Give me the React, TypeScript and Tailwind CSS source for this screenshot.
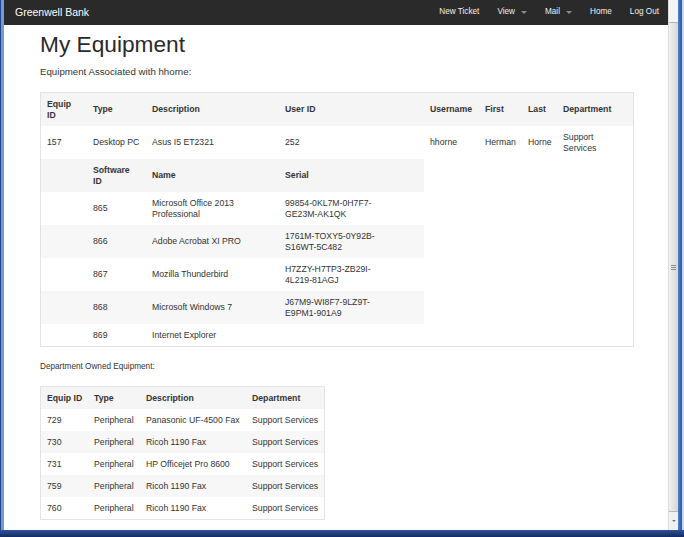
import React from "react";

const td = "px-[6px] py-[5.5px] leading-[11px] align-middle text-left";
const th = "px-[6px] py-[5.5px] leading-[11px] align-middle text-left font-bold text-[#333]";

function Caret() {
  return (
    <span className="ml-[6px] inline-block w-0 h-0 border-l-[3px] border-r-[3px] border-t-[3px] border-l-transparent border-r-transparent border-t-[#8a8a8a] align-middle" />
  );
}

const software = [
  { id: "865", name: ["Microsoft Office 2013", "Professional"], serial: ["99854-0KL7M-0H7F7-", "GE23M-AK1QK"] },
  { id: "866", name: ["Adobe Acrobat XI PRO"], serial: ["1761M-TOXY5-0Y92B-", "S16WT-5C482"] },
  { id: "867", name: ["Mozilla Thunderbird"], serial: ["H7ZZY-H7TP3-ZB29I-", "4L219-81AGJ"] },
  { id: "868", name: ["Microsoft Windows 7"], serial: ["J67M9-WI8F7-9LZ9T-", "E9PM1-901A9"] },
  { id: "869", name: ["Internet Explorer"], serial: [] as string[] },
];

const dept = [
  ["729", "Peripheral", "Panasonic UF-4500 Fax", "Support Services"],
  ["730", "Peripheral", "Ricoh 1190 Fax", "Support Services"],
  ["731", "Peripheral", "HP Officejet Pro 8600", "Support Services"],
  ["759", "Peripheral", "Ricoh 1190 Fax", "Support Services"],
  ["760", "Peripheral", "Ricoh 1190 Fax", "Support Services"],
];

function Lines({ lines }: { lines: string[] }) {
  return (
    <>
      {lines.map((l, i) => (
        <React.Fragment key={i}>
          {i > 0 && <br />}
          {l}
        </React.Fragment>
      ))}
    </>
  );
}

export default function App() {
  return (
    <div className="w-[684px] h-[537px] overflow-hidden flex flex-col bg-white font-['Liberation_Sans',Arial,sans-serif] text-[#333]">
      <div className="flex flex-1 min-h-0">
        {/* left frame */}
        <div className="flex">
          <div className="w-[1px] bg-[#24448a]" />
          <div className="w-[3px] bg-[#6f9bd6]" />
        </div>

        {/* content */}
        <div className="flex-1 flex flex-col min-w-0">
          <nav className="h-[25px] bg-[#2a2a2a] flex items-center pl-[11px] pr-[9px] shrink-0">
            <span className="text-[10.5px] text-white">Greenwell Bank</span>
            <div className="ml-auto flex items-center gap-[18px] text-[8.2px] text-[#f0f0f0]">
              <span>New Ticket</span>
              <span className="flex items-center">View<Caret /></span>
              <span className="flex items-center">Mail<Caret /></span>
              <span>Home</span>
              <span>Log Out</span>
            </div>
          </nav>

          <main className="pl-[36px] pt-[7px]">
            <h1 className="text-[22.7px] leading-[25px] text-[#2a2a2a]">My Equipment</h1>
            <p className="mt-[9px] text-[9.7px] leading-[12px]">Equipment Associated with hhorne:</p>

            <div className="mt-[14px] w-[594px] border border-[#e3e3e3] text-[8.7px]">
              <table className="w-full table-fixed border-collapse">
                <colgroup>
                  <col className="w-[46px]" />
                  <col className="w-[59px]" />
                  <col className="w-[133px]" />
                  <col className="w-[145px]" />
                  <col className="w-[55px]" />
                  <col className="w-[43px]" />
                  <col className="w-[35px]" />
                  <col className="w-[76px]" />
                </colgroup>
                <tbody>
                  <tr className="bg-[#f5f5f5]">
                    <th className={th}>Equip<br />ID</th>
                    <th className={th}>Type</th>
                    <th className={th}>Description</th>
                    <th className={th}>User ID</th>
                    <th className={th}>Username</th>
                    <th className={th}>First</th>
                    <th className={th}>Last</th>
                    <th className={th}>Department</th>
                  </tr>
                  <tr className="bg-white">
                    <td className={td}>157</td>
                    <td className={td}>Desktop PC</td>
                    <td className={td}>Asus I5 ET2321</td>
                    <td className={td}>252</td>
                    <td className={td}>hhorne</td>
                    <td className={td}>Herman</td>
                    <td className={td}>Horne</td>
                    <td className={td}>Support<br />Services</td>
                  </tr>
                  <tr>
                    <td className={`${td} bg-[#f5f5f5]`}></td>
                    <th className={`${th} bg-[#f5f5f5]`}>Software<br />ID</th>
                    <th className={`${th} bg-[#f5f5f5]`}>Name</th>
                    <th className={`${th} bg-[#f5f5f5]`}>Serial</th>
                    <td colSpan={4} className="bg-white"></td>
                  </tr>
                  {software.map((s, i) => {
                    const bg = i % 2 === 1 ? "bg-[#f7f7f7]" : "bg-white";
                    return (
                      <tr key={s.id}>
                        <td className={`${td} ${bg}`}></td>
                        <td className={`${td} ${bg}`}>{s.id}</td>
                        <td className={`${td} ${bg}`}><Lines lines={s.name} /></td>
                        <td className={`${td} ${bg}`}><Lines lines={s.serial} /></td>
                        <td colSpan={4} className="bg-white"></td>
                      </tr>
                    );
                  })}
                </tbody>
              </table>
            </div>

            <p className="mt-[14px] text-[8.2px] leading-[12px]">Department Owned Equipment:</p>

            <div className="mt-[13px] w-[285px] border border-[#e3e3e3] text-[8.7px]">
              <table className="w-full table-fixed border-collapse">
                <colgroup>
                  <col className="w-[47px]" />
                  <col className="w-[52px]" />
                  <col className="w-[106px]" />
                  <col className="w-[78px]" />
                </colgroup>
                <tbody>
                  <tr className="bg-[#f5f5f5]">
                    <th className={`${th} whitespace-nowrap`}>Equip ID</th>
                    <th className={`${th} whitespace-nowrap`}>Type</th>
                    <th className={`${th} whitespace-nowrap`}>Description</th>
                    <th className={`${th} whitespace-nowrap`}>Department</th>
                  </tr>
                  {dept.map((r, i) => (
                    <tr key={r[0]} className={i % 2 === 1 ? "bg-[#f7f7f7]" : "bg-white"}>
                      {r.map((c, j) => (
                        <td key={j} className={`${td} whitespace-nowrap`}>{c}</td>
                      ))}
                    </tr>
                  ))}
                </tbody>
              </table>
            </div>
          </main>
        </div>

        {/* scrollbar */}
        <div className="w-[10px] flex flex-col bg-[#eaeaea] border-l border-[#dcdcdc]">
          <div className="h-[22px] bg-[#f4f4f4]" />
          <div className="flex-1 border-y border-[#b8b8b8] bg-gradient-to-r from-[#f0f0f0] to-[#d6d6d6] flex flex-col items-center justify-center gap-[1px]">
            <div className="w-[5px] h-[1px] bg-[#8c8c8c]" />
            <div className="w-[5px] h-[1px] bg-[#8c8c8c]" />
            <div className="w-[5px] h-[1px] bg-[#8c8c8c]" />
          </div>
          <div className="h-[18px] bg-[#f0f0f0] flex items-center justify-center">
            <span className="inline-block w-0 h-0 border-l-[2px] border-r-[2px] border-t-[2px] border-l-transparent border-r-transparent border-t-[#777]" />
          </div>
        </div>

        {/* right frame */}
        <div className="flex">
          <div className="w-[4px] bg-gradient-to-r from-[#4f80cc] to-[#2a57a8]" />
          <div className="w-[2px] bg-[#c8d6ee]" />
        </div>
      </div>
      {/* bottom frame */}
      <div className="h-[7px] bg-gradient-to-b from-[#2f539e] to-[#162a5e] shrink-0" />
    </div>
  );
}
